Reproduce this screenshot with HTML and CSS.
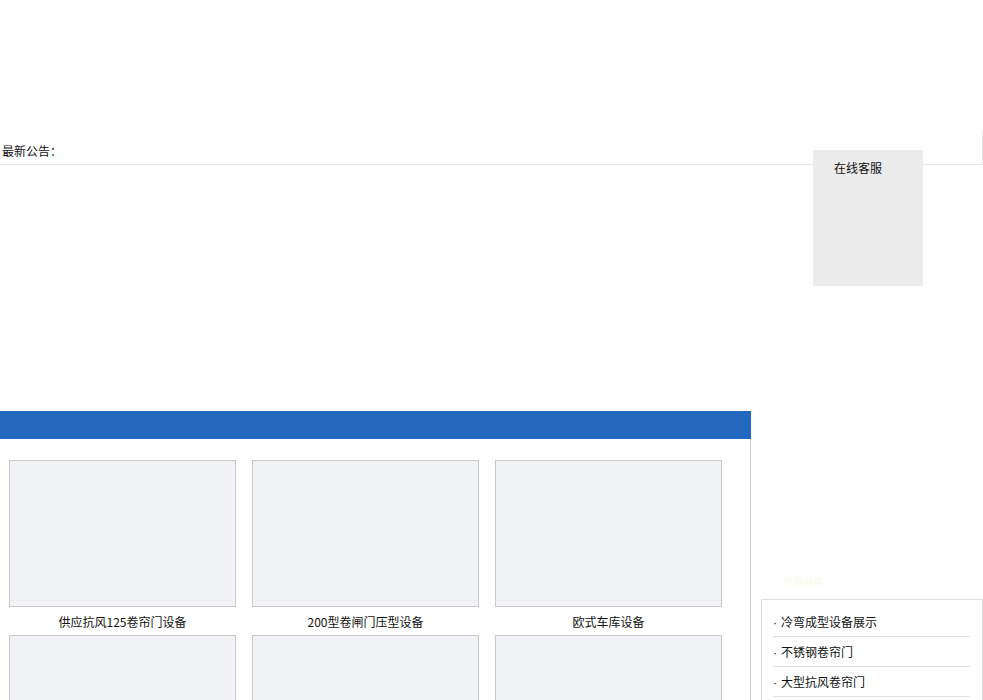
FILE: index.html
```html
<!DOCTYPE html>
<html lang="zh-CN">
<head>
<meta charset="utf-8">
<title>卷帘门设备</title>
<link rel="stylesheet" href="styles.css">
</head>
<body>
<div class="header"></div>
<div class="notice">最新公告：</div>
<div class="kefu">在线客服</div>
<div class="banner"></div>
<div class="main">
  <div class="left">
    <div class="bar"></div>
    <div class="products">
      <div class="item"><div class="pic"></div><div class="cap">供应抗风125卷帘门设备</div></div>
      <div class="item"><div class="pic"></div><div class="cap">200型卷闸门压型设备</div></div>
      <div class="item"><div class="pic"></div><div class="cap">欧式车库设备</div></div>
      <div class="item"><div class="pic"></div><div class="cap"></div></div>
      <div class="item"><div class="pic"></div><div class="cap"></div></div>
      <div class="item"><div class="pic"></div><div class="cap"></div></div>
    </div>
  </div>
  <div class="right">
    <div class="tag">产品分类</div>
    <div class="catbox">
      <ul class="cats">
        <li><span class="dot">·</span>冷弯成型设备展示</li>
        <li><span class="dot">·</span>不锈钢卷帘门</li>
        <li><span class="dot">·</span>大型抗风卷帘门</li>
      </ul>
    </div>
  </div>
</div>
</body>
</html>
```
FILE: styles.css
```css
html, body {
  margin: 0;
  padding: 0;
  background: #fff;
  font-family: "Noto Sans CJK SC", "Liberation Sans", sans-serif;
  font-size: 12px;
  color: #111;
}
.header {
  height: 131px;
}
.notice {
  width: 980px;
  height: 20px;
  padding: 13px 0 0 2px;
  line-height: 14px;
  border-bottom: 1px solid #e6e6e6;
  border-right: 1px solid #e6e6e6;
}
.kefu {
  position: absolute;
  left: 813px;
  top: 150px;
  width: 89px;
  height: 126px;
  padding: 10px 0 0 21px;
  line-height: 16px;
  background: #ececec;
}
.banner {
  height: 246px;
}
.main {
  display: flex;
  gap: 10px;
  align-items: flex-start;
}
.left {
  width: 751px;
}
.bar {
  height: 28px;
  background: #2368be;
}
.products {
  border-right: 1px solid #cfcfcf;
  padding: 21px 0 0 9px;
  display: grid;
  grid-template-columns: repeat(3, 227px);
  column-gap: 16px;
  height: 240px;
  align-content: start;
}
.pic {
  height: 145px;
  background: #f1f2f6;
  border: 1px solid #c9c9c9;
}
.cap {
  height: 28px;
  line-height: 30px;
  text-align: center;
}
.right {
  width: 222px;
  padding-top: 165px;
}
.tag {
  height: 23px;
  padding-left: 22px;
  line-height: 12px;
  font-size: 10px;
  color: #fcfae8;
}
.catbox {
  border: 1px solid #dedede;
  padding: 7px 12px 0 11px;
  height: 100px;
}
.cats {
  list-style: none;
  margin: 0;
  padding: 0;
}
.cats li {
  height: 29px;
  line-height: 29px;
  border-bottom: 1px solid #dedede;
}
.dot {
  font-family: "Liberation Sans", sans-serif;
  margin-right: 4px;
}
```
